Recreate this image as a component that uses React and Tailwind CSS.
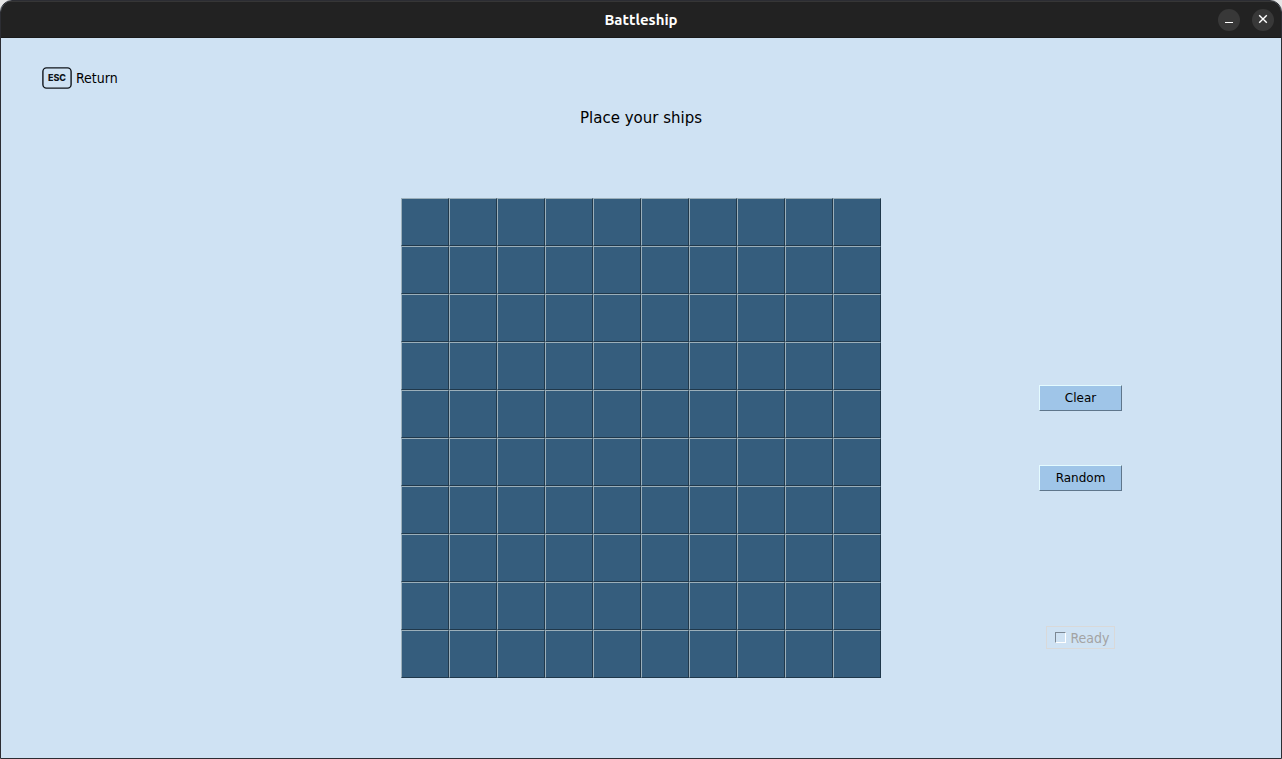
const SIZE = 10;
const ROWS = "ABCDEFGHIJ";

const actionClass =
  "h-[26px] w-[83px] border border-t-[#e4fbff] border-l-[#e4fbff] border-r-[#5f768b] border-b-[#5f768b] bg-[#9fc5e8] text-xs leading-4 text-black";

function TitleBar() {
  return (
    <header className="grid h-[37px] grid-cols-[1fr_auto_1fr] items-center border-t border-b border-t-[#363636] border-b-[#1a1a1a] bg-[#222222] px-[7px]">
      <h1 className="col-start-2 font-['Ubuntu','Noto_Sans',sans-serif] text-[15px] leading-5 font-bold text-white">
        Battleship
      </h1>
      <div className="flex justify-end gap-3">
        <button
          type="button"
          aria-label="Minimize"
          className="flex size-[22px] items-center justify-center rounded-full bg-[#383838] text-white"
        >
          <svg width="22" height="22" viewBox="0 0 22 22" aria-hidden="true">
            <path d="M7 13.5h8" stroke="currentColor" strokeWidth="1" />
          </svg>
        </button>
        <button
          type="button"
          aria-label="Close"
          className="flex size-[22px] items-center justify-center rounded-full bg-[#383838] text-white"
        >
          <svg width="22" height="22" viewBox="0 0 22 22" aria-hidden="true">
            <path d="M7.2 6.2l7.6 7.6M14.8 6.2l-7.6 7.6" stroke="currentColor" strokeWidth="1.4" />
          </svg>
        </button>
      </div>
    </header>
  );
}

function EscKey() {
  return (
    <svg width="30" height="22" viewBox="0 0 30 22" aria-hidden="true">
      <rect x="0.9" y="0.9" width="28.2" height="20.2" rx="3.6" fill="none" stroke="#10151b" strokeWidth="1.4" />
      <text
        x="15"
        y="14"
        textAnchor="middle"
        fill="#10151b"
        className="font-['Inter','Liberation_Sans',sans-serif] text-[9px] font-extrabold"
      >
        ESC
      </text>
    </svg>
  );
}

function Board() {
  return (
    <div role="group" aria-label="Board" className="grid grid-cols-10">
      {Array.from({ length: SIZE * SIZE }, (_, i) => (
        <button
          key={i}
          type="button"
          aria-label={`${ROWS[Math.floor(i / SIZE)]}${(i % SIZE) + 1}`}
          className="size-12 border border-t-[#9bafba] border-l-[#9bafba] border-r-[#20384b] border-b-[#20384b] bg-[#355d7d]"
        />
      ))}
    </div>
  );
}

export default function App() {
  return (
    <div className="min-h-screen bg-[#e6e6e6] font-['DejaVu_Sans',sans-serif] text-black">
      <div className="flex min-h-screen flex-col overflow-hidden rounded-t-xl border border-[#2c2d33] bg-[#cfe2f3]">
        <TitleBar />
        <main className="flex flex-1 flex-col">
          <div className="flex px-[41px] pt-7">
            <button
              type="button"
              className="flex items-center gap-1 font-['DejaVu_Sans_Condensed','DejaVu_Sans',sans-serif] text-sm leading-6"
            >
              <EscKey />
              Return
            </button>
          </div>
          <h2 className="pt-4 text-center text-[15px] leading-6">Place your ships</h2>
          <div className="grid grid-cols-[1fr_auto_1fr] pt-[68px]">
            <div className="col-start-2">
              <Board />
            </div>
            <div className="flex flex-col items-center justify-end pr-px pb-[29px]">
              <div className="flex flex-col items-center gap-[54px] pb-[135px]">
                <button type="button" className={actionClass}>
                  Clear
                </button>
                <button type="button" className={actionClass}>
                  Random
                </button>
              </div>
              <label className="flex h-[23px] items-center gap-1 border border-[#d9d9d9] pr-1 pl-2 font-['DejaVu_Sans_Condensed','DejaVu_Sans',sans-serif] text-sm text-[#a3a3a3]">
                <input
                  type="checkbox"
                  disabled
                  className="size-[11px] appearance-none border border-t-[#7b8793] border-l-[#7b8793] border-r-white border-b-white"
                />
                Ready
              </label>
            </div>
          </div>
        </main>
      </div>
    </div>
  );
}
